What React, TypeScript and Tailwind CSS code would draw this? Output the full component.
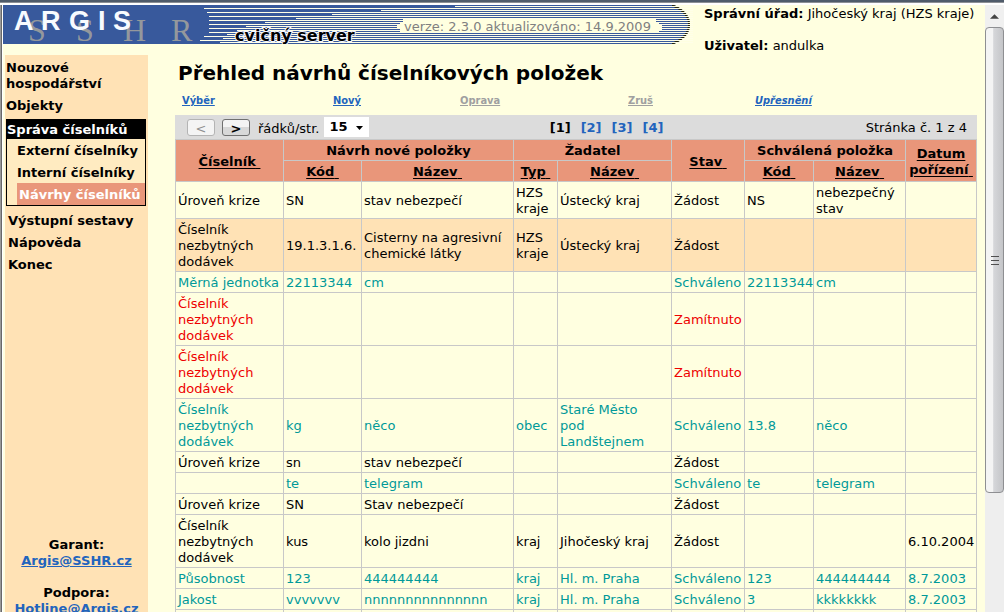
import React from "react";

type Row = { kind: "new" | "ok" | "no"; shaded?: boolean; cells: string[] };

const rows: Row[] = [
  { kind: "new", cells: ["Úroveň krize", "SN", "stav nebezpečí", "HZS kraje", "Ústecký kraj", "Žádost", "NS", "nebezpečný stav", ""] },
  { kind: "new", shaded: true, cells: ["Číselník nezbytných dodávek", "19.1.3.1.6.", "Cisterny na agresivní chemické látky", "HZS kraje", "Ústecký kraj", "Žádost", "", "", ""] },
  { kind: "ok", cells: ["Měrná jednotka", "22113344", "cm", "", "", "Schváleno", "22113344", "cm", ""] },
  { kind: "no", cells: ["Číselník nezbytných dodávek", "", "", "", "", "Zamítnuto", "", "", ""] },
  { kind: "no", cells: ["Číselník nezbytných dodávek", "", "", "", "", "Zamítnuto", "", "", ""] },
  { kind: "ok", cells: ["Číselník nezbytných dodávek", "kg", "něco", "obec", "Staré Město\npod\nLandštejnem", "Schváleno", "13.8", "něco", ""] },
  { kind: "new", cells: ["Úroveň krize", "sn", "stav nebezpečí", "", "", "Žádost", "", "", ""] },
  { kind: "ok", cells: ["", "te", "telegram", "", "", "Schváleno", "te", "telegram", ""] },
  { kind: "new", cells: ["Úroveň krize", "SN", "Stav nebezpečí", "", "", "Žádost", "", "", ""] },
  { kind: "new", cells: ["Číselník nezbytných dodávek", "kus", "kolo jizdni", "kraj", "Jihočeský kraj", "Žádost", "", "", "6.10.2004"] },
  { kind: "ok", cells: ["Působnost", "123", "444444444", "kraj", "Hl. m. Praha", "Schváleno", "123", "444444444", "8.7.2003"] },
  { kind: "ok", cells: ["Jakost", "vvvvvvv", "nnnnnnnnnnnnnnn", "kraj", "Hl. m. Praha", "Schváleno", "3", "kkkkkkkk", "8.7.2003"] },
  { kind: "new", cells: ["", "", "", "", "", "", "", "", ""] },
];

const tone = { new: "text-black", ok: "text-[#009999]", no: "text-[#ee0000]" };

// Left end of each light line of the banner, from top to bottom.
const stripeStarts = [452, 201, 378, 204, 329, 206, 293, 206, 262, 206, 243, 206, 234, 206, 224, 201, 220, 197, 217];

const argis: [string, number][] = [["A", 11], ["R", 38], ["G", 66], ["I", 95], ["S", 110]];
const sshr: [string, number][] = [["S", 25], ["S", 73], ["H", 120], ["R", 168]];

function Banner() {
  return (
    <div className="relative shrink-0">
      <svg width="690" height="39" viewBox="0 0 690 39" role="img" aria-label="ARGIS SSHR">
        <defs>
          <clipPath id="banner-shape">
            <path d="M0 0H671Q687 7 687 19.500T671 39H0Z" />
          </clipPath>
        </defs>
        <g clipPath="url(#banner-shape)">
          <rect width="690" height="39" fill="#38599c" />
          <path d="M669 0H671Q687 7 687 19.500T671 39H669" fill="none" stroke="#26260a" strokeWidth="4" />
        </g>
        <g shapeRendering="crispEdges" fill="#ffffe8">
          {stripeStarts.map((x, i) => (
            <rect key={i} x={x} y={i * 2 + 1} width={690 - x} height="1" />
          ))}
          <path fill="#ffffe0" d="M400 14H653V17H656V20H659V25H656V28H400V27H397V24H394V20H397V17H400Z" />
        </g>
        {sshr.map(([c, x], i) => (
          <text key={i} x={x} y="36" fontSize="32" fill="#94989c" fontFamily="'Liberation Serif', serif">{c}</text>
        ))}
        {argis.map(([c, x]) => (
          <text key={c} x={x} y="25" fontSize="27" fontWeight="bold" fill="#f8fbff" fontFamily="'Liberation Sans', sans-serif">{c}</text>
        ))}
        <text
          x="232" y="36" fontSize="16" fontWeight="bold" fill="#000" stroke="#f4f6ff" strokeWidth="2"
          paintOrder="stroke" fontFamily="'DejaVu Sans', sans-serif"
        >
          cvičný server
        </text>
      </svg>
      <p className="absolute left-[401px] top-[15px] whitespace-nowrap leading-[14px] text-[#808080]">
        verze: 2.3.0 aktualizováno: 14.9.2009
      </p>
    </div>
  );
}

const blue = "text-[#2264bd]";

function Sidebar() {
  return (
    <aside className="ml-0.5 w-[143px] shrink-0 bg-[#ffe2b5] pt-[5px] font-bold">
      <nav>
        <a href="#nouzove" className="block px-px pb-1.5">Nouzové hospodářství</a>
        <a href="#objekty" className="block px-px pb-[5px]">Objekty</a>
        <div className="mx-px w-[140px] border border-black bg-[#ffebc1]">
          <a href="#sprava" className="block bg-black pb-px pt-0.5 text-white">Správa číselníků</a>
          <a href="#externi" className="block pb-0.5 pl-2.5 pt-1">Externí číselníky</a>
          <a href="#interni" className="block pb-0.5 pl-2.5 pt-1">Interní číselníky</a>
          <a href="#navrhy" className="ml-2.5 block bg-[#e9967a] pb-0.5 pl-0.5 pt-1 text-white">Návrhy číselníků</a>
        </div>
        <a href="#sestavy" className="mt-[7px] block px-[3px] pb-1.5">Výstupní sestavy</a>
        <a href="#napoveda" className="block px-[3px] pb-1.5">Nápověda</a>
        <a href="#konec" className="block px-[3px]">Konec</a>
      </nav>
      <div className="mt-[264px] text-center">
        <p>Garant:</p>
        <a href="mailto:Argis@SSHR.cz" className={`${blue} underline`}>Argis@SSHR.cz</a>
        <p className="mt-4">Podpora:</p>
        <a href="mailto:Hotline@Argis.cz" className={`${blue} underline`}>Hotline@Argis.cz</a>
      </div>
    </aside>
  );
}

function SortLink({ children }: { children: React.ReactNode }) {
  return <a href="#sort" className="whitespace-pre-wrap underline underline-offset-2">{children}{" "}</a>;
}

const cellBox = "border border-[#c8c8c8] px-0.5 pb-px pt-[3px]";
const th = `${cellBox} font-bold`;

const pagerButton = "flex h-[17px] w-7 items-center justify-center rounded-[3px] border pt-0.5 text-[13px] leading-none";

function Pager() {
  return (
    <div className="flex h-6 items-center bg-[#dcdcdc] pl-3 pr-2.5">
      <button disabled aria-label="Předchozí" className={`${pagerButton} border-[#b4b4b4] bg-[#f4f4f4] text-[#909090]`}>&lt;</button>
      <button aria-label="Další" className={`${pagerButton} ml-[7px] border-[#707070] bg-linear-to-b from-[#f4f4f4] from-50% to-[#d8d8d8] to-50% font-bold`}>&gt;</button>
      <label htmlFor="page-size" className="ml-2 pt-1">řádků/str.</label>
      <div className="relative ml-[5px]">
        <select id="page-size" defaultValue="15" className="block h-5 w-[45px] appearance-none bg-white pl-[5px] text-[13px] font-bold leading-5">
          <option>15</option>
          <option>30</option>
        </select>
        <svg width="7" height="4" viewBox="0 0 7 4" className="pointer-events-none absolute right-1.5 top-[9px]">
          <path d="M0 0H7L3.500 4Z" fill="#000" />
        </svg>
      </div>
      <nav className="flex flex-1 justify-center gap-2.5 pr-[22px] pt-0.5 font-bold" aria-label="Stránky">
        <span>[1]</span>
        <a href="#2" className={blue}>[2]</a>
        <a href="#3" className={blue}>[3]</a>
        <a href="#4" className={blue}>[4]</a>
      </nav>
      <span className="pt-0.5">Stránka č. 1 z 4</span>
    </div>
  );
}

function Actions() {
  const link = "underline underline-offset-1";
  return (
    <nav className="flex pl-[7px] font-['DejaVu_Sans_Condensed','DejaVu_Sans',sans-serif] text-[11px] font-bold leading-4" aria-label="Akce">
      <span className="w-[151px]"><a href="#vyber" className={`${link} ${blue}`}>Výběr</a></span>
      <span className="w-[127px]"><a href="#novy" className={`${link} ${blue}`}>Nový</a></span>
      <span className="w-[168px] text-[#a0a0a0]"><span className={link}>Oprava</span></span>
      <span className="w-[127px] text-[#a0a0a0]"><span className={link}>Zruš</span></span>
      <a href="#upresneni" className={`${link} ${blue} italic`}>Upřesnění</a>
    </nav>
  );
}

function Proposals() {
  return (
    <table className="w-full table-fixed border-collapse">
      <colgroup>
        <col className="w-[108px]" />
        <col className="w-[78px]" />
        <col className="w-[152px]" />
        <col className="w-[44px]" />
        <col className="w-[114px]" />
        <col className="w-[73px]" />
        <col className="w-[69px]" />
        <col className="w-[92px]" />
        <col className="w-[71px]" />
      </colgroup>
      <thead className="bg-[#e9967a]">
        <tr>
          <th rowSpan={2} className={th}><SortLink>Číselník</SortLink></th>
          <th colSpan={2} className={th}>Návrh nové položky</th>
          <th colSpan={2} className={th}>Žadatel</th>
          <th rowSpan={2} className={th}><SortLink>Stav</SortLink></th>
          <th colSpan={2} className={th}>Schválená položka</th>
          <th rowSpan={2} className={th}><SortLink>{"Datum\npořízení"}</SortLink></th>
        </tr>
        <tr>
          <th className={th}><SortLink>Kód</SortLink></th>
          <th className={th}><SortLink>Název</SortLink></th>
          <th className={th}><SortLink>Typ</SortLink></th>
          <th className={th}><SortLink>Název</SortLink></th>
          <th className={th}><SortLink>Kód</SortLink></th>
          <th className={th}><SortLink>Název</SortLink></th>
        </tr>
      </thead>
      <tbody>
        {rows.map((row, i) => (
          <tr key={i} className={`${tone[row.kind]} ${row.shaded ? "bg-[#ffe2b5]" : ""}`}>
            {row.cells.map((cell, j) => (
              <td key={j} className={`h-[21px] whitespace-pre-line ${cellBox}`}>{cell}</td>
            ))}
          </tr>
        ))}
      </tbody>
    </table>
  );
}

function ScrollBar() {
  return (
    <div className="flex w-[19px] shrink-0 flex-col bg-[#eeeeee]" aria-hidden="true">
      <div className="flex h-[22px] shrink-0 items-center justify-center bg-[#f0f0f0]">
        <svg width="9" height="5" viewBox="0 0 10 5"><path d="M5 0L10 5H0Z" fill="#444" /></svg>
      </div>
      <div className="flex h-[466px] flex-col items-center justify-center gap-[3px] rounded-sm border border-[#8e8f92] bg-linear-to-r from-[#f4f4f4] from-40% via-[#d6d7da] via-45% to-[#c4c5c8]">
        <div className="h-px w-2 bg-[#505050]" />
        <div className="h-px w-2 bg-[#505050]" />
        <div className="h-px w-2 bg-[#505050]" />
      </div>
    </div>
  );
}

export default function App() {
  return (
    <div className="flex h-screen flex-col overflow-hidden bg-[#ffffe0] font-['DejaVu_Sans',Verdana,sans-serif] text-[13px] leading-4 text-black">
      <div className="h-[5px] shrink-0 border-b-2 border-t-2 border-b-white border-t-[#4f5b6a] bg-[#8c8f94]" />
      <div className="flex min-h-0 flex-1">
        <div className="w-[3px] shrink-0 border-l border-r border-l-[#9a9a9a] border-r-white bg-[#696969]" />
        <div className="flex min-w-0 flex-1 flex-col overflow-hidden">
          <header className="flex h-[50px] shrink-0">
            <Banner />
            <div className="ml-[11px] whitespace-nowrap pt-px">
              <p><b>Správní úřad:</b> Jihočeský kraj (HZS kraje)</p>
              <p className="mt-4"><b>Uživatel:</b> andulka</p>
            </div>
          </header>
          <div className="flex min-h-0 flex-1">
            <Sidebar />
            <main className="min-w-0 flex-1 pl-[27px] pr-2">
              <h1 className="mb-2 pl-[3px] pt-1.5 text-[20px] font-bold leading-6">Přehled návrhů číselníkových položek</h1>
              <Actions />
              <div className="mt-1.5"><Pager /></div>
              <Proposals />
            </main>
          </div>
        </div>
        <ScrollBar />
      </div>
    </div>
  );
}
